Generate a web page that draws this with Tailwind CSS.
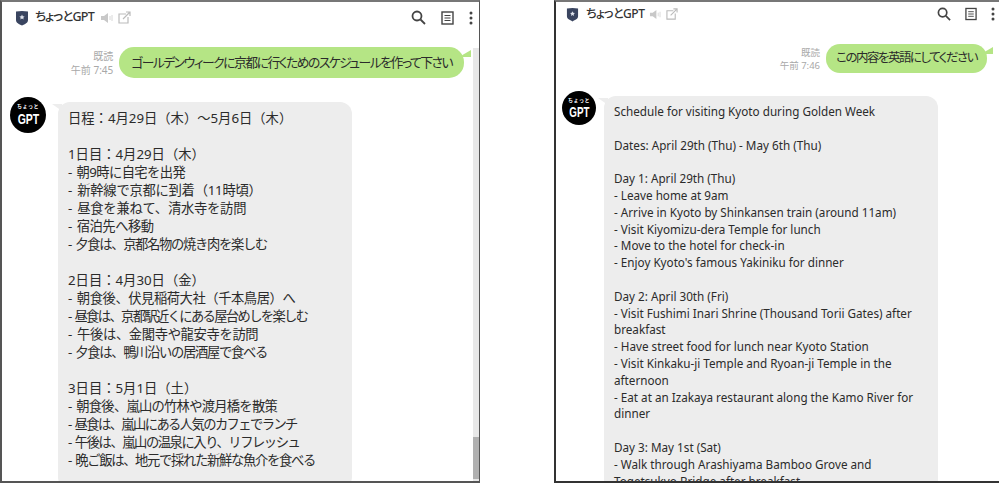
<!DOCTYPE html>
<html lang="ja">
<head>
  <meta charset="UTF-8" />
  <title>ちょっとGPT</title>
  <script src="https://cdn.jsdelivr.net/npm/@tailwindcss/browser@4"></script>
</head>
<body class="bg-white font-['Noto_Sans','Noto_Sans_CJK_JP',sans-serif] text-[#2b2b2b] overflow-hidden">
  <div class="flex w-[999px] h-[483px] overflow-hidden">

    <!-- left window -->
    <section class="w-[480px] h-[483px] shrink-0 border-2 border-r border-[#555] border-t-[#777] overflow-hidden flex flex-col relative">
      <header class="h-[29px] mt-[1px] shrink-0 flex items-center pl-[13px] pr-[6px]">
        <svg width="14" height="16" viewBox="0 0 14 16"><path d="M1 1.500Q7 .5 13 1.500V10c0 3-3 4-6 5.500C4 14 1 13 1 10z" fill="#3a4560"/><path d="M7 4.500l.8 1.700 1.800.2-1.300 1.300.3 1.800L7 8.600l-1.600.9.300-1.800-1.300-1.300 1.800-.2z" fill="#dfe3ec"/></svg>
        <span class="ml-[6px] text-[12.500px] tracking-[-0.8px] font-medium text-[#333] [font-feature-settings:'palt']">ちょっとGPT</span>
        <svg class="ml-[6px]" width="13" height="12" viewBox="0 0 13 12"><path d="M1 4h3l4-3v10L4 8H1z" fill="#c8c8c8"/><path d="M10 4v4M12 3v6" stroke="#d8d8d8"/></svg>
        <svg class="ml-[5px]" width="13" height="13" viewBox="0 0 13 13" fill="none" stroke="#bbb" stroke-width="1.200"><path d="M8 3H1v9h9V6"/><path d="M5 8l7-7M8 1h4v4"/></svg>
        <svg class="ml-auto" width="15" height="15" viewBox="0 0 15 15" fill="none" stroke="#444" stroke-width="1.800"><circle cx="6" cy="6" r="4.500"/><path d="M9.500 9.500L14 14"/></svg>
        <svg class="ml-[15px]" width="13" height="14" viewBox="0 0 13 14" fill="none" stroke="#444" stroke-width="1.400"><rect x="1" y="1" width="11" height="12"/><path d="M3.500 4.500h6M3.500 7h6M3.500 9.500h6" stroke-width="1"/></svg>
        <svg class="ml-[15px]" width="4" height="14" viewBox="0 0 4 14" fill="#444"><circle cx="2" cy="2" r="1.500"/><circle cx="2" cy="7" r="1.500"/><circle cx="2" cy="12" r="1.500"/></svg>
      </header>

      <div class="flex justify-end items-center mt-[15px] pr-[15px]">
        <div class="text-right text-[10px] leading-[14px] text-[#a8a8a8] mr-[6px] whitespace-nowrap">
          <p>既読</p>
          <p>午前 7:45</p>
        </div>
        <div class="relative h-[31px] px-[12px] flex items-center rounded-[15px] bg-[#b5e585] text-[12.800px] tracking-[-1.500px] whitespace-nowrap [font-feature-settings:'palt']">
          ゴールデンウィークに京都に行くためのスケジュールを作って下さい
          <span class="absolute right-[-7px] top-[3px] w-0 h-0 border-l-[12px] border-l-[#b5e585] border-b-[7px] border-b-transparent rotate-180"></span>
        </div>
      </div>

      <div class="flex mt-[24px] pl-[8px]">
        <div class="w-[36px] h-[36px] rounded-full bg-black text-white flex flex-col items-center justify-center shrink-0 mt-[-5px]">
          <span class="text-[5px] leading-[7px] font-bold tracking-[0.5px]">ちょっと</span>
          <span class="text-[15px] leading-[17px] font-bold font-['Liberation_Sans'] scale-x-[0.7]">GPT</span>
        </div>
        <div class="relative ml-[12px] w-[294px] rounded-[12px] bg-[#ededed] pl-[10px] pt-[7px] pb-[20px] text-[13.300px] leading-[18px] whitespace-nowrap [word-spacing:2px]">
          <span class="absolute left-[-6px] top-[2px] w-0 h-0 border-r-[10px] border-r-[#ededed] border-b-[7px] border-b-transparent"></span>
          <p>日程：4月29日（木）〜5月6日（木）</p>
          <p class="h-[18px]"></p>
          <p>1日目：4月29日（木）</p>
          <p class="tracking-[-0.6px]">- 朝9時に自宅を出発</p>
          <p class="tracking-[-0.25px]">- 新幹線で京都に到着（11時頃）</p>
          <p class="tracking-[-0.25px]">- 昼食を兼ねて、清水寺を訪問</p>
          <p class="tracking-[-0.5px]">- 宿泊先へ移動</p>
          <p class="tracking-[-1.3px]">- 夕食は、京都名物の焼き肉を楽しむ</p>
          <p class="h-[18px]"></p>
          <p>2日目：4月30日（金）</p>
          <p class="tracking-[-0.45px]">- 朝食後、伏見稲荷大社（千本鳥居）へ</p>
          <p class="tracking-[-1.65px]">- 昼食は、京都駅近くにある屋台めしを楽しむ</p>
          <p class="tracking-[-0.35px]">- 午後は、金閣寺や龍安寺を訪問</p>
          <p class="tracking-[-1.3px]">- 夕食は、鴨川沿いの居酒屋で食べる</p>
          <p class="h-[18px]"></p>
          <p>3日目：5月1日（土）</p>
          <p class="tracking-[-0.75px]">- 朝食後、嵐山の竹林や渡月橋を散策</p>
          <p class="tracking-[-1.6px]">- 昼食は、嵐山にある人気のカフェでランチ</p>
          <p class="tracking-[-1.45px]">- 午後は、嵐山の温泉に入り、リフレッシュ</p>
          <p class="tracking-[-1.3px]">- 晩ご飯は、地元で採れた新鮮な魚介を食べる</p>
        </div>
      </div>

      <div class="absolute right-0 top-[46px] bottom-0 w-[6px] bg-[#e8e8e8]">
        <div class="absolute bottom-[2px] left-0 w-full h-[42px] bg-[#b0b0b0]"></div>
      </div>
    </section>

    <div class="w-[74px] shrink-0"></div>

    <!-- right window -->
    <section class="flex-1 h-[483px] border-l-2 border-t-2 border-b-2 border-[#333] border-t-[#777] overflow-hidden flex flex-col relative">
      <header class="h-[24px] shrink-0 flex items-center pl-[10px] pr-[4px]">
        <svg width="13" height="15" viewBox="0 0 14 16"><path d="M1 1.500Q7 .5 13 1.500V10c0 3-3 4-6 5.500C4 14 1 13 1 10z" fill="#3a4560"/><path d="M7 4.500l.8 1.700 1.800.2-1.300 1.300.3 1.800L7 8.600l-1.600.9.300-1.800-1.300-1.300 1.800-.2z" fill="#dfe3ec"/></svg>
        <span class="ml-[7px] text-[12px] tracking-[-0.5px] font-medium text-[#333] [font-feature-settings:'palt']">ちょっとGPT</span>
        <svg class="ml-[5px]" width="12" height="11" viewBox="0 0 13 12"><path d="M1 4h3l4-3v10L4 8H1z" fill="#c8c8c8"/><path d="M10 4v4M12 3v6" stroke="#d8d8d8"/></svg>
        <svg class="ml-[5px]" width="12" height="12" viewBox="0 0 13 13" fill="none" stroke="#bbb" stroke-width="1.200"><path d="M8 3H1v9h9V6"/><path d="M5 8l7-7M8 1h4v4"/></svg>
        <svg class="ml-auto" width="14" height="14" viewBox="0 0 15 15" fill="none" stroke="#444" stroke-width="1.800"><circle cx="6" cy="6" r="4.500"/><path d="M9.500 9.500L14 14"/></svg>
        <svg class="ml-[14px]" width="12" height="14" viewBox="0 0 13 14" fill="none" stroke="#444" stroke-width="1.400"><rect x="1" y="1" width="11" height="12"/><path d="M3.500 4.500h6M3.500 7h6M3.500 9.500h6" stroke-width="1"/></svg>
        <svg class="ml-[14px]" width="4" height="14" viewBox="0 0 4 14" fill="#444"><circle cx="2" cy="2" r="1.500"/><circle cx="2" cy="7" r="1.500"/><circle cx="2" cy="12" r="1.500"/></svg>
      </header>

      <div class="flex justify-end items-center mt-[18px] pr-[12px]">
        <div class="text-right text-[9.500px] leading-[13px] text-[#a8a8a8] mr-[6px] whitespace-nowrap">
          <p>既読</p>
          <p>午前 7:46</p>
        </div>
        <div class="relative h-[29px] px-[10px] flex items-center rounded-[14px] bg-[#b5e585] text-[12.500px] tracking-[-1.500px] whitespace-nowrap [font-feature-settings:'palt']">
          この内容を英語にしてください
          <span class="absolute right-[-6px] top-[3px] w-0 h-0 border-l-[12px] border-l-[#b5e585] border-b-[7px] border-b-transparent rotate-180"></span>
        </div>
      </div>

      <div class="flex mt-[23px] pl-[6px]">
        <div class="w-[34px] h-[34px] rounded-full bg-black text-white flex flex-col items-center justify-center shrink-0 mt-[-5px]">
          <span class="text-[5px] leading-[7px] font-bold tracking-[0.5px]">ちょっと</span>
          <span class="text-[14px] leading-[16px] font-bold font-['Liberation_Sans'] scale-x-[0.7]">GPT</span>
        </div>
        <div class="relative ml-[8px] w-[334px] rounded-[12px] bg-[#ededed] pl-[10px] pr-[4px] pt-[7px] pb-[20px] text-[11.700px] leading-[16.800px] whitespace-pre-line"><span class="absolute left-[-6px] top-[2px] w-0 h-0 border-r-[10px] border-r-[#ededed] border-b-[7px] border-b-transparent"></span>Schedule for visiting Kyoto during Golden Week

Dates: April 29th (Thu) - May 6th (Thu)

Day 1: April 29th (Thu)
- Leave home at 9am
- Arrive in Kyoto by Shinkansen train (around 11am)
- Visit Kiyomizu-dera Temple for lunch
- Move to the hotel for check-in
- Enjoy Kyoto's famous Yakiniku for dinner

Day 2: April 30th (Fri)
- Visit Fushimi Inari Shrine (Thousand Torii Gates) after
breakfast
- Have street food for lunch near Kyoto Station
- Visit Kinkaku-ji Temple and Ryoan-ji Temple in the
afternoon
- Eat at an Izakaya restaurant along the Kamo River for
dinner

Day 3: May 1st (Sat)
- Walk through Arashiyama Bamboo Grove and
Togetsukyo Bridge after breakfast</div>
      </div>
    </section>
  </div>
</body>
</html>
